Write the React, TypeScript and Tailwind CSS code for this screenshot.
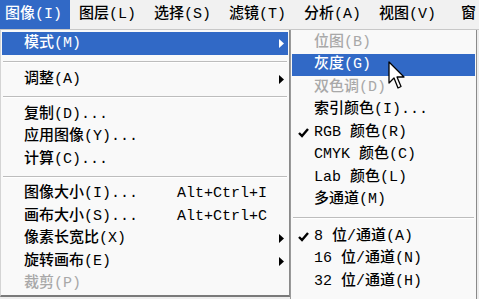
// Photoshop-style "图像" menu, XP look

const FONT = { fontFamily: '"Liberation Mono", "Noto Sans CJK SC", monospace' }

function Arrow() {
  return (
    <svg width="5" height="9" viewBox="0 0 5 9">
      <path d="M0 0 L5 4.5 L0 9 Z" fill="currentColor" />
    </svg>
  )
}

function Check() {
  return (
    <svg width="11" height="10" viewBox="0 0 11 10" className="absolute left-[6px] top-[7px]">
      <path d="M1 5 L4 8 L10 1" stroke="#000" strokeWidth="2.4" fill="none" />
    </svg>
  )
}

function Sep({ h }: { h: string }) {
  return (
    <div className={`${h} flex items-center px-[1px]`}>
      <div className="w-full border-t border-[#bdbdbd] border-b border-b-white" />
    </div>
  )
}

type Item = { label: string; key?: string; sub?: boolean; off?: boolean; on?: boolean; check?: boolean }

function Row({ it, pl }: { it: Item; pl: string }) {
  return (
    <div
      className={`relative h-[22.5px] flex items-center whitespace-nowrap ${pl} pr-[4px] ${it.on ? 'bg-[#3169c6] text-white' : it.off ? 'text-[#a8a8a8]' : 'text-black'}`}
    >
      {it.check && <Check />}
      <span>{it.label}</span>
      {it.key && <span className="ml-auto mr-[17px]">{it.key}</span>}
      {it.sub && <span className={it.key ? '' : 'ml-auto'}><Arrow /></span>}
    </div>
  )
}

export default function App() {
  const bar = ['图像(I)', '图层(L)', '选择(S)', '滤镜(T)', '分析(A)', '视图(V)', '窗']
  return (
    <div className="relative w-[479px] h-[299px] overflow-hidden bg-[#ededed] text-[15px] leading-none font-medium" style={FONT}>
      {/* menubar */}
      <div className="h-[30px] flex items-stretch bg-[#f1f1f1] border-b border-[#c8c8c8] whitespace-nowrap">
        {bar.map((b, i) => (
          <div
            key={b}
            className={`shrink-0 flex items-center ${i === 0 ? 'bg-[#3169c6] text-white pl-[5px] pr-[8px]' : 'text-black px-[9px]'} ${i === 6 ? 'pl-[16px]' : ''}`}
          >
            {b}
          </div>
        ))}
      </div>

      <div className="flex h-[269px]">
        {/* main menu */}
        <div className="w-[290px] h-[267px] bg-[#f9f9f9] border-l border-l-[#d4d4d4] border-r border-r-[#8a8a8a] border-b-2 border-b-[#7a7a7a] pt-[2px] px-[1px]">
          <Row it={{ label: '模式(M)', sub: true, on: true }} pl="pl-[22px]" />
          <Sep h="h-[14px]" />
          <Row it={{ label: '调整(A)', sub: true }} pl="pl-[22px]" />
          <Sep h="h-[12px]" />
          <Row it={{ label: '复制(D)...' }} pl="pl-[22px]" />
          <Row it={{ label: '应用图像(Y)...' }} pl="pl-[22px]" />
          <Row it={{ label: '计算(C)...' }} pl="pl-[22px]" />
          <Sep h="h-[12px]" />
          <Row it={{ label: '图像大小(I)...', key: 'Alt+Ctrl+I' }} pl="pl-[22px]" />
          <Row it={{ label: '画布大小(S)...', key: 'Alt+Ctrl+C' }} pl="pl-[22px]" />
          <Row it={{ label: '像素长宽比(X)', sub: true }} pl="pl-[22px]" />
          <Row it={{ label: '旋转画布(E)', sub: true }} pl="pl-[22px]" />
          <Row it={{ label: '裁剪(P)', off: true }} pl="pl-[22px]" />
        </div>

        {/* submenu */}
        <div className="w-[187px] bg-[#f9f9f9] border-l border-[#9a9a9a] border-r border-r-[#8a8a8a] pt-[1px] px-[1px]">
          <Row it={{ label: '位图(B)', off: true }} pl="pl-[22px]" />
          <Row it={{ label: '灰度(G)', on: true }} pl="pl-[22px]" />
          <Row it={{ label: '双色调(D)', off: true }} pl="pl-[22px]" />
          <Row it={{ label: '索引颜色(I)...' }} pl="pl-[22px]" />
          <Row it={{ label: 'RGB 颜色(R)', check: true }} pl="pl-[22px]" />
          <Row it={{ label: 'CMYK 颜色(C)' }} pl="pl-[22px]" />
          <Row it={{ label: 'Lab 颜色(L)' }} pl="pl-[22px]" />
          <Row it={{ label: '多通道(M)' }} pl="pl-[22px]" />
          <Sep h="h-[14px]" />
          <Row it={{ label: '8 位/通道(A)', check: true }} pl="pl-[22px]" />
          <Row it={{ label: '16 位/通道(N)' }} pl="pl-[22px]" />
          <Row it={{ label: '32 位/通道(H)' }} pl="pl-[22px]" />
        </div>
      </div>

      {/* mouse cursor */}
      <svg width="20" height="30" viewBox="0 0 20 30" className="absolute left-[388px] top-[61px]">
        <path d="M1 1 L1 22 L6 17 L10 27 L13 25.5 L9 16 L16 16 Z" fill="#fff" stroke="#000" strokeWidth="1.3" strokeLinejoin="round" />
      </svg>
    </div>
  )
}
